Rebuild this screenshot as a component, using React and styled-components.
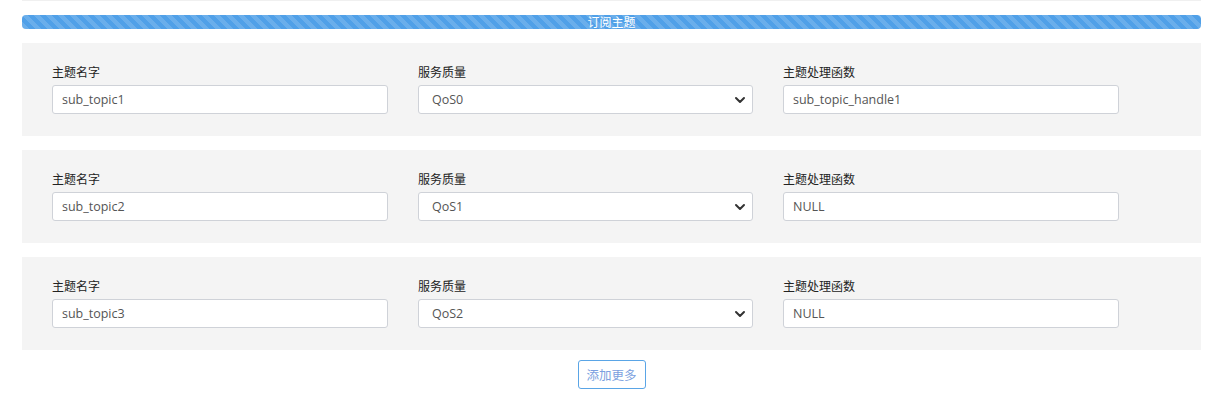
import React from "react";
import styled, { createGlobalStyle } from "styled-components";

const Global = createGlobalStyle`
  html, body { margin: 0; padding: 0; background: #fff; }
  body { font-family: "Open Sans", "Noto Sans CJK SC", sans-serif; }
  * { box-sizing: border-box; }
`;

const Page = styled.div`
  width: 1224px;
  padding: 0 23px 0 22px;
  display: flex;
  flex-direction: column;
`;

const TopEdge = styled.div`
  height: 1px;
  background: #f0f0f0;
`;

const Progress = styled.div`
  margin-top: 14px;
  height: 14px;
  border-radius: 4px;
  background-color: #50a0e8;
  background-image: linear-gradient(
    45deg,
    rgba(255, 255, 255, 0.15) 25%,
    transparent 25%,
    transparent 50%,
    rgba(255, 255, 255, 0.15) 50%,
    rgba(255, 255, 255, 0.15) 75%,
    transparent 75%,
    transparent
  );
  background-size: 12px 12px;
  color: #fff;
  font-family: "Noto Sans CJK SC", sans-serif;
  font-size: 12px;
  line-height: 14px;
  text-align: center;
`;

const List = styled.div`
  margin-top: 14px;
  display: flex;
  flex-direction: column;
  gap: 14px;
`;

const Panel = styled.div`
  background: #f4f4f4;
  height: 93px;
  padding: 21px 30px 0 30px;
  display: grid;
  grid-template-columns: 336px 335px 336px;
  column-gap: 30px;
`;

const Field = styled.div`
  display: flex;
  flex-direction: column;
`;

const Label = styled.label`
  font-family: "Noto Sans CJK SC", sans-serif;
  font-size: 12px;
  line-height: 16px;
  color: #222;
  margin-bottom: 5px;
`;

const Input = styled.input`
  height: 29px;
  width: 100%;
  border: 1px solid #cfd2d8;
  border-radius: 3px;
  background: #fff;
  padding: 0 9px;
  font-family: "Open Sans", "Noto Sans CJK SC", sans-serif;
  font-size: 12.5px;
  color: #555;
  outline: none;
`;

const SelectWrap = styled.div`
  position: relative;
  height: 29px;
  border: 1px solid #cfd2d8;
  border-radius: 3px;
  background: #fff;
  display: flex;
  align-items: center;
  padding-left: 13px;
  font-family: "Open Sans", "Noto Sans CJK SC", sans-serif;
  font-size: 12.5px;
  color: #555;
`;

const Chevron = styled.svg`
  position: absolute;
  right: 6px;
  top: 50%;
  transform: translateY(-50%);
`;

const Footer = styled.div`
  display: flex;
  justify-content: center;
  padding-top: 10px;
`;

const Button = styled.button`
  height: 29px;
  width: 68px;
  border: 1px solid #5aa5e6;
  border-radius: 3px;
  background: #fff;
  color: #7b9fe0;
  font-family: "Noto Sans CJK SC", sans-serif;
  font-size: 12.5px;
  padding: 0;
`;

const rows = [
  { name: "sub_topic1", qos: "QoS0", handle: "sub_topic_handle1" },
  { name: "sub_topic2", qos: "QoS1", handle: "NULL" },
  { name: "sub_topic3", qos: "QoS2", handle: "NULL" },
];

export default function App() {
  return (
    <>
      <Global />
      <Page>
        <TopEdge />
        <Progress>订阅主题</Progress>
        <List>
          {rows.map((r) => (
            <Panel key={r.name}>
              <Field>
                <Label>主题名字</Label>
                <Input defaultValue={r.name} />
              </Field>
              <Field>
                <Label>服务质量</Label>
                <SelectWrap>
                  {r.qos}
                  <Chevron width="12" height="8" viewBox="0 0 12 8">
                    <path
                      d="M2 2 L6 6 L10 2"
                      fill="none"
                      stroke="#333"
                      strokeWidth="2"
                      strokeLinecap="round"
                      strokeLinejoin="round"
                    />
                  </Chevron>
                </SelectWrap>
              </Field>
              <Field>
                <Label>主题处理函数</Label>
                <Input defaultValue={r.handle} />
              </Field>
            </Panel>
          ))}
        </List>
        <Footer>
          <Button>添加更多</Button>
        </Footer>
      </Page>
    </>
  );
}
